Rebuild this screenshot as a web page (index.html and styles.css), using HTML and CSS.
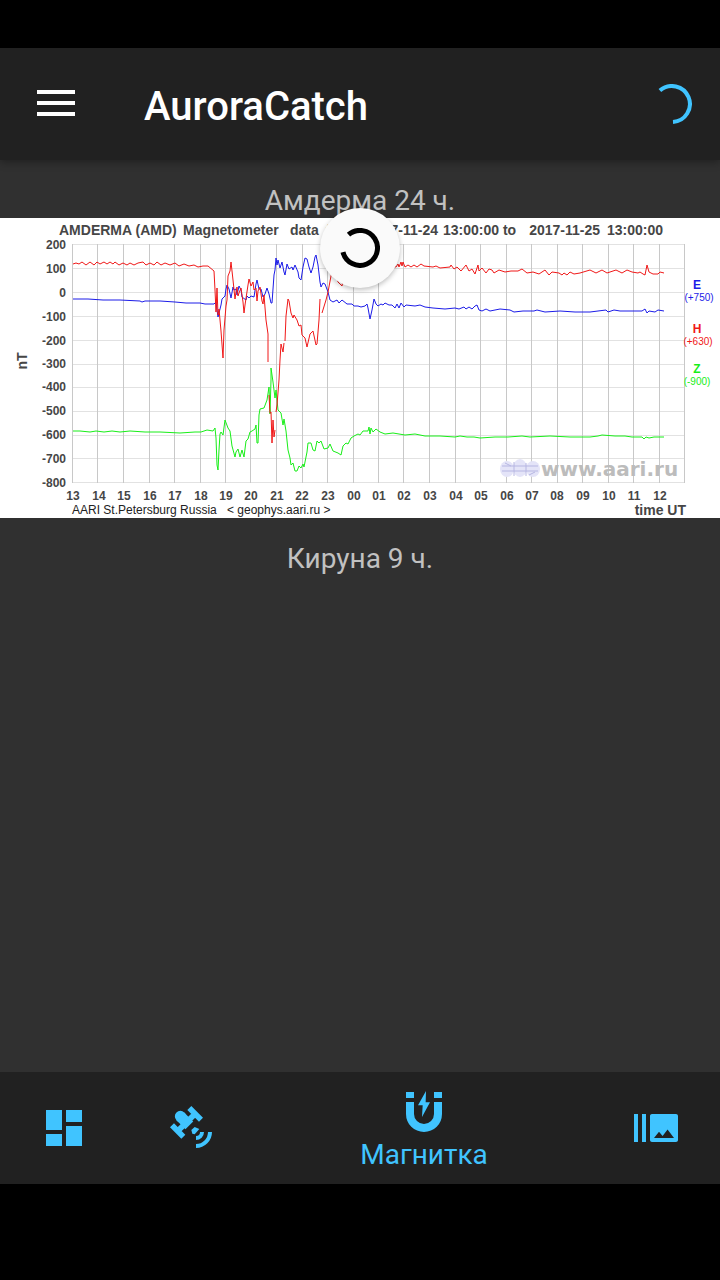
FILE: index.html
```html
<!DOCTYPE html>
<html lang="ru">
<head>
<meta charset="utf-8">
<meta name="viewport" content="width=device-width, initial-scale=1">
<title>AuroraCatch</title>
<link rel="stylesheet" href="styles.css">
</head>
<body>
<div class="app">
  <header class="app-bar">
    <button class="menu-button" type="button" aria-label="Меню">
      <svg class="menu-icon" viewBox="0 0 38 26" aria-hidden="true"><path d="M0 0h38v4H0zM0 11h38v4H0zM0 22h38v4H0z"/></svg>
    </button>
    <h1 class="app-title">AuroraCatch</h1>
    <svg class="progress" viewBox="0 0 40 40" role="img" aria-label="Загрузка"><path d="M7.9 6.6A18 18 0 1 1 21 38"/></svg>
  </header>

  <main class="content">
    <h2 class="caption">Амдерма 24 ч.</h2>
    <svg class="chart" viewBox="0 218 720 300" role="img" aria-label="Magnetometer data">
      <path class="grid-h" d="M73 244.5H685M73 268.5H685M73 292.5H685M73 316.5H685M73 340.5H685M73 364.5H685M73 387.5H685M73 411.5H685M73 435.5H685M73 458.5H685M73 482.5H685"/>
      <path class="grid-v" d="M72.500 244V483M97.500 244V483M123.500 244V483M149.500 244V483M174.500 244V483M200.500 244V483M225.500 244V483M250.500 244V483M276.500 244V483M302.500 244V483M327.500 244V483M353.500 244V483M378.500 244V483M403.500 244V483M429.500 244V483M455.500 244V483M480.500 244V483M506.500 244V483M531.500 244V483M557.500 244V483M582.500 244V483M608.500 244V483M633.500 244V483M659.500 244V483M684.500 244V483"/>
      <g class="emblem">
        <ellipse cx="507" cy="469" rx="7" ry="8"/><ellipse cx="520" cy="468" rx="7" ry="9"/><ellipse cx="533" cy="469" rx="7" ry="8"/>
        <path d="M502 466h36M502 471h36M514 462v14M526 463v13M505 463l6 3M529 475l6-3"/>
      </g>
      <text class="watermark" x="541" y="476">www.aari.ru</text>

      <polyline class="line green" points="73,431 80,431 90,432 96,431 104,432 112,431 120,432 130,431 145,432 160,432 180,433 195,432 201,432 207,430 213,431 215,428 216,438 217,465 218,470 219,450 220,434 221,432 223,435 225,420 228,428 230,431 232,446 235,457 236,452 238,449 240,457 242,450 244,457 246,441 248,439 250,432 252,431 255,429 256,425 257,443 258,443 259,415 260,409 264,408 267,400 269,387 270,414 271,380 271,368 273,382 275,398 276,390 278,410 281,413 283,425 284,419 286,431 288,450 290,458 291,465 293,463 295,471 297,471 299,466 301,468 303,464 304,467 307,452 308,443 311,443 313,450 315,451 317,441 319,443 321,441 324,449 328,448 330,444 333,451 338,453 341,455 343,446 346,443 348,444 351,438 354,436 358,434 360,435 363,431 368,431 369,427 370,434 371,428 373,432 376,429 380,432 385,434 393,433 405,435 415,434 425,436 440,436 455,437 460,436 467,437 474,437 480,438 495,437 508,437 522,436 530,437 550,436 570,437 590,437 598,436 602,435 615,436 625,436 632,437 642,437 644,439 646,437 649,438 654,437 664,437"/>
      <polyline class="line blue" points="73,299 88,299 103,300 120,300 140,301 142,302 145,301 160,301 175,302 186,303 200,303 205,304 214,304 216,302 217,310 218,317 220,309 221,305 222,299 225,296 226,289 227,285 229,289 231,298 233,287 234,290 236,289 237,295 239,286 241,290 242,297 246,300 247,296 249,298 251,296 254,297 256,284 257,280 259,289 261,289 263,297 265,294 267,288 269,294 271,303 272,303 274,275 275,270 276,258 277,265 278,260 280,268 282,262 284,272 285,275 287,264 289,269 292,267 293,270 295,265 298,272 299,278 301,280 303,267 305,258 307,259 309,267 311,273 313,267 315,257 316,255 318,265 320,282 321,287 323,283 325,284 328,292 330,300 333,302 337,300 339,303 342,300 347,304 352,304 354,306 358,306 361,307 365,306 367,304 368,308 370,319 372,310 374,299 376,304 378,306 381,304 383,305 385,303 389,305 392,305 395,308 397,304 399,308 401,303 404,307 406,305 415,306 420,305 425,307 433,308 445,309 455,308 459,309 464,307 466,309 469,307 472,309 475,306 477,305 479,310 482,311 486,309 490,311 500,309 510,310 514,312 523,311 534,311 537,310 545,312 560,311 575,312 590,312 606,310 608,312 614,310 620,311 642,311 645,309 647,313 649,311 655,312 658,310 664,311"/>
      <polyline class="line red" points="73,264 76,263 79,264 82,262 86,265 90,262 94,265 97,262 100,264 104,262 107,264 110,262 113,264 115,262 119,265 123,263 127,265 130,263 134,265 138,263 143,262 146,265 150,263 154,265 157,262 161,265 165,263 170,265 175,263 179,266 184,264 189,266 194,265 198,267 203,266 208,266 214,271 215,290 216,312 217,288 218,315 219,309 221,331 223,358 224,330 226,306 227,300 228,276 230,271 231,262 233,280 235,299 236,292 237,287 238,296 239,293 241,288 243,302 244,313 245,305 248,285 249,279 251,286 253,282 254,290 256,288 257,301 258,291 260,287 262,301 263,304 264,295 266,320 268,334 268,362"/>
      <polyline class="line red" points="269,395 270,413 271,412 272,443 273,420 274,437 275,430"/>
      <polyline class="line red" points="276,412 277,405 279,380 280,360 281,344 283,352 284,343"/>
      <polyline class="line red" points="285,341 286,316 288,299 289,301 291,313 293,318 294,315 297,320 299,326 301,325 302,335 305,338 307,347 310,334 313,331 316,345 317,344 319,320 320,299"/>
      <polyline class="line red" points="322,313 326,300 328,292 331,276 334,266 338,282 342,286 346,262 370,264 396,267 398,264 399,267 401,262 402,266 403,262 405,267 408,265 411,267 414,265 417,267 421,264 424,266 433,267 436,266 440,268 450,267 451,265 454,269 457,267 461,271 466,265 469,271 472,269 475,274 478,265 479,271 482,268 486,273 489,269 492,270 494,273 499,270 505,272 511,271 518,271 522,269 527,273 533,272 539,274 545,270 549,275 552,272 559,273 562,275 564,273 567,275 570,272 574,274 580,273 590,270 596,273 602,270 607,273 616,270 622,273 627,270 632,272 638,273 640,272 643,274 645,275 647,265 649,272 653,274 658,274 660,272 664,273"/>

      <text class="chart-title" x="59" y="235">AMDERMA (AMD)</text>
      <text class="chart-title" x="183" y="235">Magnetometer</text>
      <text class="chart-title" x="290" y="235">data</text>
      <text class="chart-title" x="326" y="235">from</text>
      <text class="chart-title end" x="438" y="235">2017-11-24</text>
      <text class="chart-title" x="443" y="235">13:00:00 to</text>
      <text class="chart-title end" x="600" y="235">2017-11-25</text>
      <text class="chart-title end" x="663" y="235">13:00:00</text>
      <g class="tick end">
        <text x="66" y="249">200</text><text x="66" y="273">100</text><text x="66" y="297">0</text><text x="66" y="321">-100</text><text x="66" y="345">-200</text><text x="66" y="368">-300</text><text x="66" y="391">-400</text><text x="66" y="415">-500</text><text x="66" y="439">-600</text><text x="66" y="463">-700</text><text x="66" y="487">-800</text>
      </g>
      <g class="tick middle">
        <text x="73" y="500">13</text><text x="99" y="500">14</text><text x="124" y="500">15</text><text x="150" y="500">16</text><text x="175" y="500">17</text><text x="201" y="500">18</text><text x="226" y="500">19</text><text x="251" y="500">20</text><text x="277" y="500">21</text><text x="302" y="500">22</text><text x="328" y="500">23</text><text x="354" y="500">00</text><text x="379" y="500">01</text><text x="404" y="500">02</text><text x="430" y="500">03</text><text x="456" y="500">04</text><text x="481" y="500">05</text><text x="507" y="500">06</text><text x="532" y="500">07</text><text x="557" y="500">08</text><text x="583" y="500">09</text><text x="609" y="500">10</text><text x="634" y="500">11</text><text x="660" y="500">12</text>
      </g>
      <text class="chart-title middle" transform="translate(27 361) rotate(-90)">nT</text>
      <text class="chart-title end" x="686" y="515">time UT</text>
      <text class="credit" x="72" y="514">AARI St.Petersburg Russia</text>
      <text class="credit" x="227" y="514">&lt; geophys.aari.ru &gt;</text>
      <g class="legend blue-text"><text class="series" x="697" y="289">E</text><text x="699" y="301">(+750)</text></g>
      <g class="legend red-text"><text class="series" x="697" y="333">H</text><text x="698" y="345">(+630)</text></g>
      <g class="legend green-text"><text class="series" x="697" y="373">Z</text><text x="697" y="385">(-900)</text></g>
    </svg>
    <h2 class="caption">Кируна 9 ч.</h2>
    <div class="refresh" role="status" aria-label="Обновление">
      <svg class="refresh-icon" viewBox="0 0 40 40" aria-hidden="true"><path d="M8.500 6.700A17.500 17.500 0 1 1 3 24.200"/></svg>
    </div>
  </main>

  <nav class="bottom-nav">
    <button class="nav-item" type="button" aria-label="Панель">
      <svg class="icon" viewBox="0 0 24 24" aria-hidden="true"><path d="M3 13h8V3H3zM3 21h8v-6H3zM13 21h8V11h-8zM13 3v6h8V3z"/></svg>
    </button>
    <button class="nav-item" type="button" aria-label="Спутник">
      <svg class="icon" viewBox="444 132 144 144" aria-hidden="true">
        <g fill="none" stroke="currentColor">
          <path stroke-width="17" d="M508 144 543 179M456 196 490 230M474 212 525 162"/>
          <path stroke-width="33" stroke-linecap="round" d="M481 169 483 171"/>
          <path stroke-width="33" d="M481 169 508 196"/>
        </g>
        <path d="M517 221 514 210 524 201 538 207 524 223z"/>
        <path d="M528 228A12 12 0 0 0 540 216H552A24 24 0 0 1 528 240zM528 252A36 36 0 0 0 564 216H576A48 48 0 0 1 528 264z"/>
      </svg>
    </button>
    <button class="nav-item active" type="button" aria-current="page">
      <svg class="icon" viewBox="180 54 144 144" aria-hidden="true"><path d="M198 66h24v18h-24zM282 66h24v18h-24zM198 96h24v36a30 30 0 0 0 60 0V96h24v36a54 54 0 0 1-108 0zM258 63 234 106H248L246 141 270 97H257z"/></svg>
      <span class="nav-label">Магнитка</span>
    </button>
    <button class="nav-item" type="button" aria-label="Снимки">
      <svg class="icon" viewBox="0 0 24 24" aria-hidden="true"><path d="M1 5h2v14H1zm4 0h2v14H5zm17 0H10c-.55 0-1 .45-1 1v12c0 .55.45 1 1 1h12c.55 0 1-.45 1-1V6c0-.55-.45-1-1-1zM11 17l2.500-3.150L15.290 16l2.500-3.220L21 17H11z"/></svg>
    </button>
  </nav>
</div>
</body>
</html>
```
FILE: styles.css
```css
* { box-sizing: border-box; }

body {
  margin: 0;
  background: #000;
  font-family: Roboto, "Noto Sans", sans-serif;
}

button {
  margin: 0;
  padding: 0;
  border: 0;
  background: none;
  color: inherit;
  font: inherit;
}

svg { display: block; }

.app {
  display: flex;
  flex-direction: column;
  min-height: 100vh;
  padding: 48px 0 96px;
}

.app-bar {
  position: relative;
  z-index: 1;
  display: flex;
  align-items: center;
  height: 112px;
  padding: 0 28px 0 0;
  background: #212121;
  color: #fff;
  box-shadow: 0 2px 8px rgba(0, 0, 0, 0.35);
}

.menu-button {
  display: grid;
  place-items: center;
  width: 112px;
  height: 112px;
  padding-bottom: 2px;
}

.menu-icon {
  width: 38px;
  fill: #fff;
}

.app-title {
  flex: 1;
  margin: 0;
  padding: 6px 0 0 32px;
  font-size: 40px;
  font-weight: 500;
  line-height: 48px;
}

.progress {
  width: 40px;
  fill: none;
  stroke: #40c4ff;
  stroke-width: 4;
}

.content {
  position: relative;
  flex: 1;
  background: #303030;
}

.caption {
  margin: 0;
  padding-top: 24px;
  color: #c1c1c1;
  font-size: 28px;
  font-weight: 400;
  line-height: 34px;
  text-align: center;
}

.chart {
  width: 100%;
  background: #fff;
  font-family: "Liberation Sans", Arial, sans-serif;
}

.grid-h, .grid-v {
  fill: none;
  stroke-width: 1;
}

.grid-h { stroke: #e2e2e2; }
.grid-v { stroke: #c8c8c8; }

.line {
  fill: none;
  stroke-width: 1;
}

.red { stroke: #f01818; }
.blue { stroke: #1c1ce8; }
.green { stroke: #18ee18; }

.chart-title {
  fill: #464646;
  font-size: 14px;
  font-weight: 700;
}

.tick {
  fill: #464646;
  font-size: 12px;
  font-weight: 700;
}

.end { text-anchor: end; }
.middle { text-anchor: middle; }

.credit {
  fill: #222;
  font-size: 12px;
}

.watermark {
  fill: #bcbcbc;
  font-family: "DejaVu Sans", sans-serif;
  font-size: 20px;
  font-weight: 700;
}

.emblem {
  fill: #e4e4f8;
  stroke: #b6b6e2;
  stroke-width: 1;
}

.emblem ellipse { stroke: none; }

.legend {
  font-size: 10px;
  text-anchor: middle;
}

.series {
  font-size: 12px;
  font-weight: 700;
}

.blue-text { fill: #1c1ce8; }
.red-text { fill: #f01818; }
.green-text { fill: #18ee18; }

.refresh {
  position: absolute;
  top: 48px;
  left: 50%;
  display: grid;
  place-items: center;
  width: 80px;
  height: 80px;
  margin-left: -40px;
  border-radius: 50%;
  background: #fafafa;
  box-shadow: 0 2px 5px rgba(0, 0, 0, 0.25);
}

.refresh-icon {
  width: 40px;
  fill: none;
  stroke: #000;
  stroke-width: 5;
}

.bottom-nav {
  display: flex;
  height: 112px;
  background: #212121;
  color: #40c4ff;
}

.nav-item {
  display: flex;
  flex: 0 0 128px;
  flex-direction: column;
  align-items: center;
  justify-content: center;
}

.nav-item.active {
  flex: 1;
  padding-top: 6px;
}

.icon {
  width: 48px;
  height: 48px;
  fill: currentColor;
}

.nav-label {
  font-size: 28px;
  line-height: 38px;
}
```
